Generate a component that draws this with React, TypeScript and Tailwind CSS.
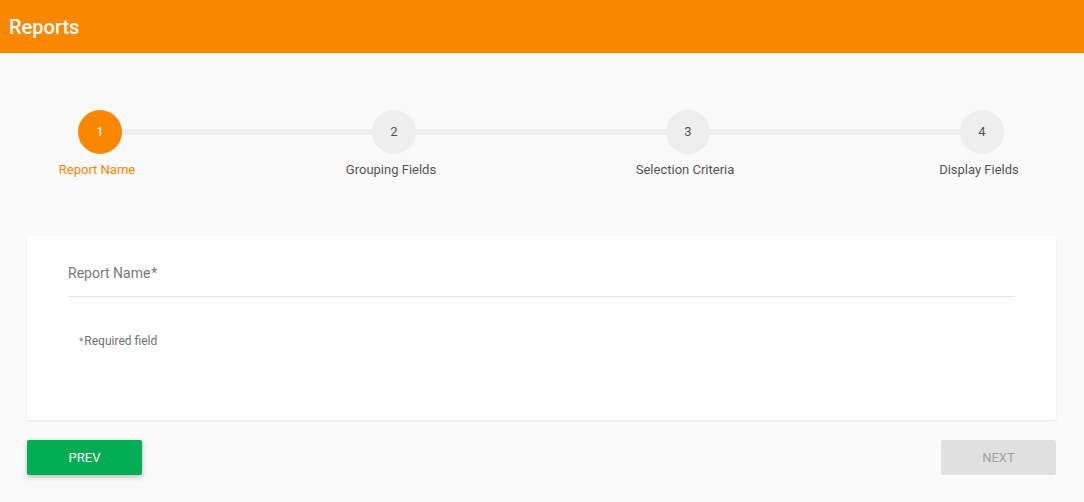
import React from "react";

const steps = ["Report Name", "Grouping Fields", "Selection Criteria", "Display Fields"];

export default function App() {
  return (
    <div className="min-h-[502px] bg-[#fafafa] font-['Roboto',sans-serif]">
      <header className="h-[53px] bg-[#fb8600] flex items-center px-[9px]">
        <h1 className="text-white text-[20px] font-medium">Reports</h1>
      </header>
      <div className="pt-[57px] pl-[56px] pr-[58px]">
        <div className="relative flex justify-between">
          <div className="absolute left-[44px] right-[44px] top-[19px] h-[6px] bg-[#eeeeee]" />
          {steps.map((s, i) => (
            <div key={s} className="relative w-[88px] flex flex-col items-center">
              <div
                className={
                  i === 0
                    ? "w-[44px] h-[44px] rounded-full bg-[#fb8600] text-white text-[13px] flex items-center justify-center"
                    : "w-[44px] h-[44px] rounded-full bg-[#eeeeee] text-[#555] text-[13px] flex items-center justify-center"
                }
              >
                {i + 1}
              </div>
              <div
                className={
                  i === 0
                    ? "mt-[6px] mr-[6px] text-[13px] leading-[20px] whitespace-nowrap text-[#fb8600]"
                    : "mt-[6px] mr-[6px] text-[13px] leading-[20px] whitespace-nowrap text-[#555]"
                }
              >
                {s}
              </div>
            </div>
          ))}
        </div>
      </div>
      <div className="pl-[27px] pr-[28px] mt-[56px]">
        <div className="bg-white h-[184px] rounded-[2px] shadow-[0_1px_2px_rgba(0,0,0,0.08)] px-[41px] pt-[27px]">
          <div className="border-b border-[#e6e6e6] pb-[13px] text-[14px] leading-[20px] text-[#7a7a7a]">
            Report Name<span className="ml-[1px]">*</span>
          </div>
          <div className="mt-[36px] ml-[11px] text-[12px] leading-[16px] text-[#707070] flex items-baseline">
            <span className="text-[10px] text-[#8a7a6a] mr-[1px]">*</span>Required field
          </div>
        </div>
        <div className="mt-[20px] flex justify-between">
          <button className="w-[115px] h-[35px] rounded-[2px] bg-[#00ad52] text-white text-[13px] font-normal shadow-[0_2px_5px_rgba(0,0,0,0.25)]">
            PREV
          </button>
          <button className="w-[115px] h-[35px] rounded-[2px] bg-[#e0e0e0] text-[#a3a3a3] text-[13px] font-normal">
            NEXT
          </button>
        </div>
      </div>
    </div>
  );
}
